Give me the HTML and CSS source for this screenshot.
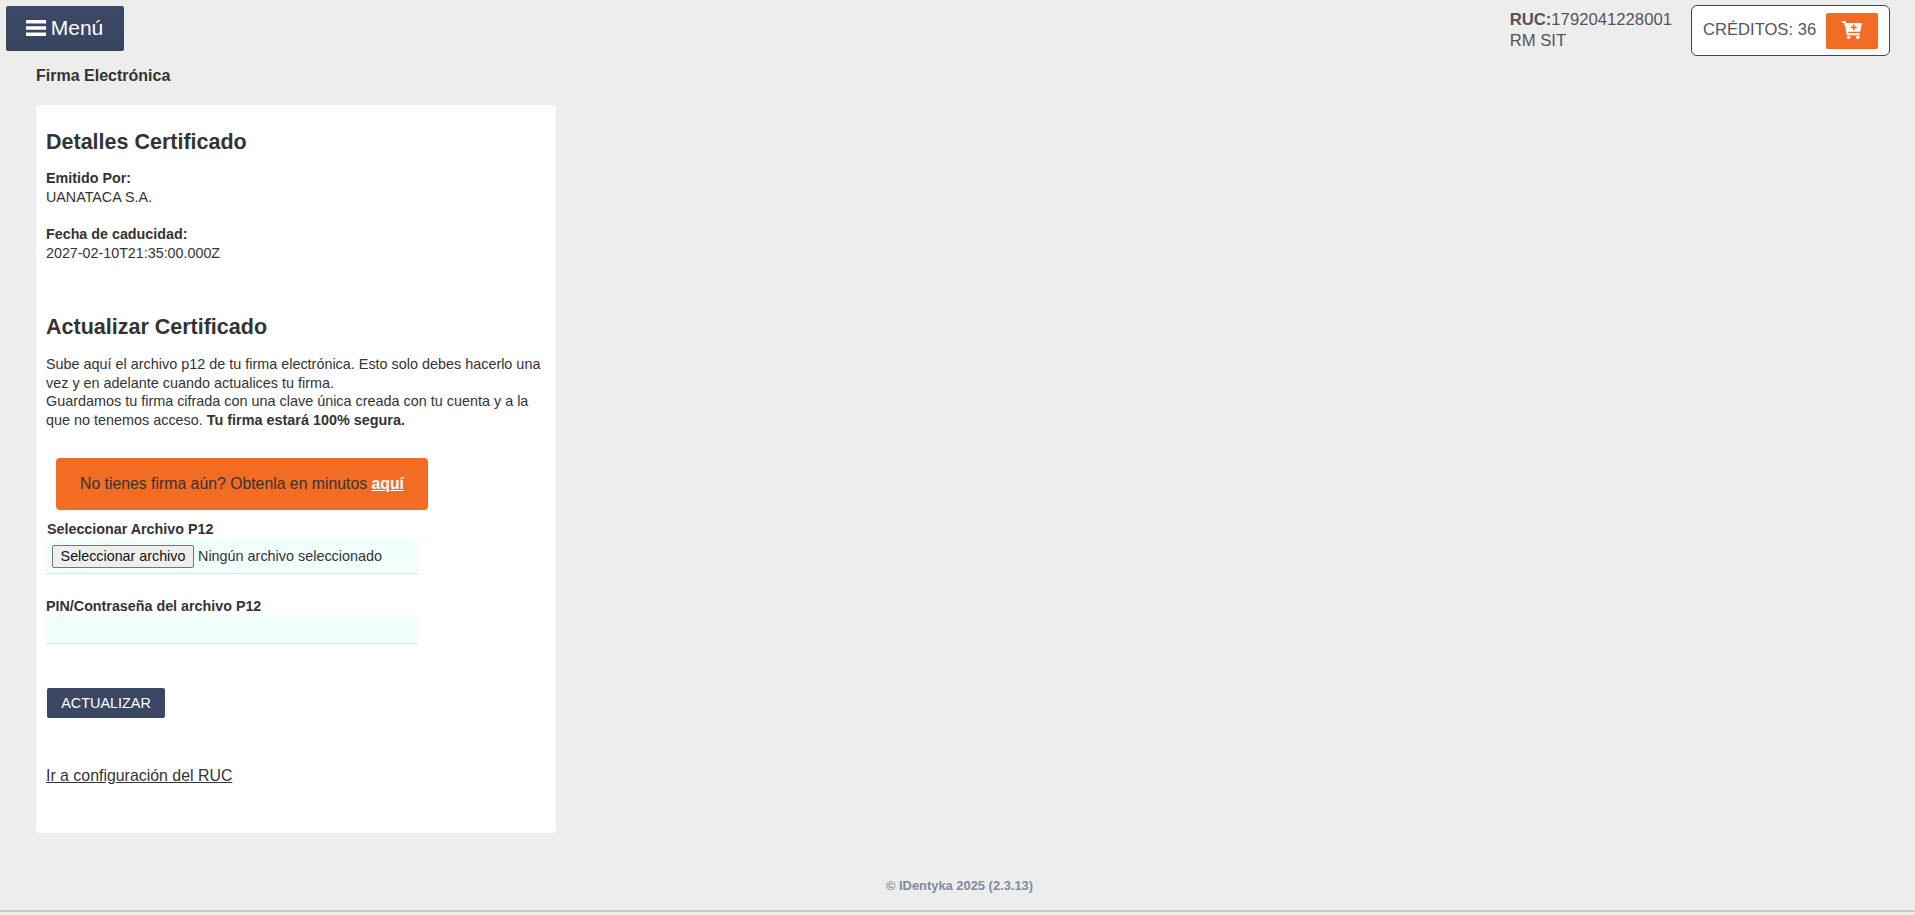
FILE: index.html
```html
<html>

	<head>
		<title> Firma Electrónica </title>
		<meta charset="utf-8">
		<link rel="stylesheet" href="styles.css">
	</head>

	<body>

		<div class="header-area">
			<button class="menu-button">
				<svg class="menu-icon" viewBox="0 0 20 18"><path d="M0 1h20v3.6H0zM0 7.2h20v3.6H0zM0 13.4h20v3.6H0z"/></svg>
				Menú
			</button>
			<div class="account-area">
				<div class="ruc-box"><b>RUC:</b>1792041228001<br>RM SIT</div>
				<div class="credits-box">
					<span class="credits-text">CRÉDITOS: 36</span>
					<a class="cart-button">
						<svg class="cart-icon" viewBox="0 0 20 18"><path d="M0 0h3.6l.5 2H20l-1.9 8.8H6.2l.3 1.5h11.6v1.9H4.9L2.2 2H0zM10.9 3.4v2.1H8.8v1.7h2.1v2.1h1.7V7.2h2.1V5.5h-2.1V3.4z" fill-rule="evenodd"/><circle cx="6.6" cy="16.2" r="1.8"/><circle cx="15.8" cy="16.2" r="1.8"/></svg>
					</a>
				</div>
			</div>
		</div>

		<div class="page-area">
			<h4 class="page-title">Firma Electrónica</h4>

			<div class="card">
				<h2 class="card-title">Detalles Certificado</h2>
				<p class="detail"><b>Emitido Por:</b><br>UANATACA S.A.</p>
				<p class="detail"><b>Fecha de caducidad:</b><br>2027-02-10T21:35:00.000Z</p>

				<h2 class="card-title second-title">Actualizar Certificado</h2>
				<p class="intro">
					Sube aquí el archivo p12 de tu firma electrónica. Esto solo debes hacerlo una vez y en adelante cuando actualices tu firma.<br>
					Guardamos tu firma cifrada con una clave única creada con tu cuenta y a la que no tenemos acceso. <b>Tu firma estará 100% segura.</b>
				</p>

				<div class="notice">No tienes firma aún? Obtenla en minutos <a href="#">aquí</a></div>

				<label class="field-label file-label">Seleccionar Archivo P12</label>
				<div class="field file-field">
					<button class="file-button">Seleccionar archivo</button>
					<span>Ningún archivo seleccionado</span>
				</div>

				<label class="field-label pin-label">PIN/Contraseña del archivo P12</label>
				<input class="field pin-field" type="password">

				<button class="update-button">ACTUALIZAR</button>

				<a class="ruc-link" href="#">Ir a configuración del RUC</a>
			</div>
		</div>

		<div class="footer-area">© IDentyka 2025 (2.3.13)</div>

	</body>

</html>
```

FILE: styles.css
```css
* {
	box-sizing: border-box;
	font-family: "Liberation Sans", Arial, sans-serif;
}

body {
	margin: 0;
	height: 915px;
	overflow: hidden;
	background: #ededed;
	color: #333;
}

.header-area {
	display: flex;
	justify-content: space-between;
	align-items: flex-start;
	height: 61px;
	padding: 6px 25px 0 6px;
}

.menu-button {
	display: flex;
	align-items: center;
	justify-content: center;
	gap: 5px;
	width: 118px;
	height: 45px;
	padding: 0 1px 2px 0;
	border: 0;
	border-radius: 2px;
	background: linear-gradient(#3b4867, #39445f);
	color: white;
	font-size: 21px;
}

.menu-icon {
	width: 20px;
	height: 18px;
	fill: white;
}

.account-area {
	display: flex;
	gap: 19px;
	margin-top: -1px;
}

.ruc-box {
	padding-top: 4px;
	font-size: 16.7px;
	line-height: 21px;
	color: #555;
}

.credits-box {
	display: flex;
	align-items: center;
	justify-content: space-between;
	width: 199px;
	height: 51px;
	padding: 0 11px;
	background: white;
	border: 1px solid #3b4664;
	border-radius: 6px;
	font-size: 16.6px;
	color: #555;
}

.credits-text {
	margin-bottom: 2px;
}

.cart-button {
	display: flex;
	align-items: center;
	justify-content: center;
	width: 52px;
	height: 36px;
	padding-bottom: 1px;
	background: #f36c23;
	border-radius: 2px;
}

.cart-icon {
	width: 20px;
	height: 18px;
	fill: white;
}

.page-area {
	height: 777px;
	margin: 0 25px 0 31px;
	padding: 0 0 0 4px;
	border: 1px solid #efefef;
}

.page-title {
	margin: 0;
	padding-top: 4px;
	height: 43px;
	font-size: 16px;
	line-height: 20px;
	color: #333;
}

.card {
	width: 520px;
	height: 728px;
	padding: 0 10px;
	background: white;
	border-radius: 4px;
	font-size: 14.3px;
	line-height: 19px;
}

.card-title {
	margin: 0;
	padding-top: 24px;
	height: 64px;
	font-size: 21.5px;
	line-height: 26px;
}

.second-title {
	height: 41px;
	padding-top: 0;
	margin-top: 51px;
}

.detail {
	margin: 0 0 18px;
}

.intro {
	margin: 0;
	font-size: 14.4px;
	line-height: 18.5px;
}

.notice {
	width: 372px;
	height: 52px;
	margin: 29px 0 0 10px;
	background: #f36c23;
	border-radius: 4px;
	text-align: center;
	font-size: 15.8px;
	line-height: 52px;
}

.notice a {
	color: white;
	font-weight: bold;
}

.field-label {
	display: block;
	font-weight: bold;
	font-size: 14.3px;
	line-height: 19px;
}

.file-label {
	margin: 10px 0 0 1px;
	height: 19px;
}

.pin-label {
	margin-top: 23px;
	height: 18px;
}

.field {
	display: block;
	width: 372px;
	background: #f0fffb;
	border: 0;
	border-bottom: 1px solid #d7e3e0;
}

.file-field {
	display: flex;
	align-items: center;
	gap: 4px;
	height: 35px;
	padding-left: 6px;
	font-size: 14.4px;
}

.file-button {
	width: 142px;
	height: 23px;
	padding: 0;
	border: 1px solid #767676;
	border-radius: 2px;
	background: #efefef;
	color: #111;
	font-size: 14.3px;
}

.pin-field {
	height: 29px;
}

.update-button {
	display: block;
	width: 118px;
	height: 30px;
	margin: 44px 0 0 1px;
	border: 0;
	border-radius: 2px;
	background: #3b4664;
	color: white;
	font-size: 14.4px;
}

.ruc-link {
	display: inline-block;
	margin-top: 48px;
	font-size: 15.9px;
	color: #333;
}

.footer-area {
	padding: 40px 0 0 4px;
	height: 74px;
	text-align: center;
	font-size: 12.9px;
	font-weight: bold;
	color: #7d8ba3;
	border-bottom: 2px solid #ccc;
}
```
